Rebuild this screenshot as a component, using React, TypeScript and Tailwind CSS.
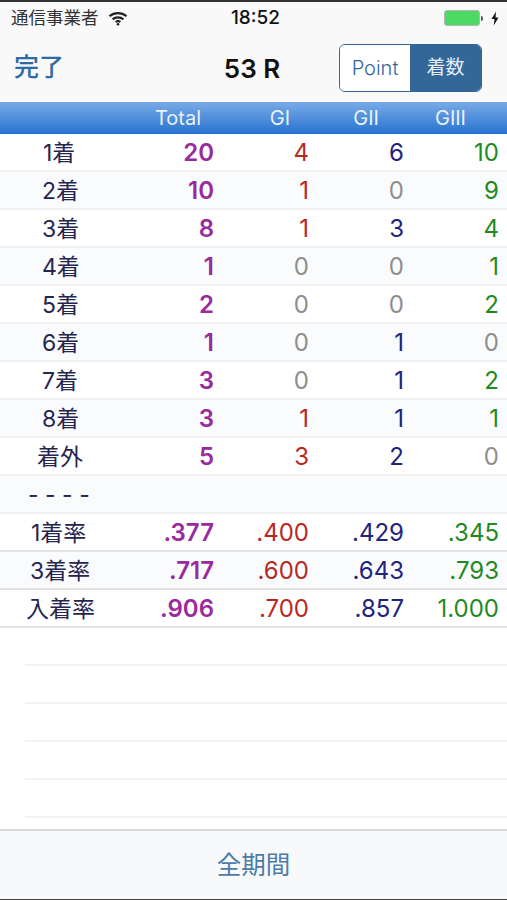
const FONT = "font-['Inter','Noto_Sans_CJK_JP',sans-serif]";

type Row = { label: string; pad: string; total: string; g1: string; g2: string; g3: string; tint?: boolean; dark?: boolean };

const ROWS: Row[] = [
  { label: "1着", pad: "pl-[18px]", total: "20", g1: "4", g2: "6", g3: "10" },
  { label: "2着", pad: "pl-[17px]", total: "10", g1: "1", g2: "0", g3: "9", tint: true },
  { label: "3着", pad: "pl-[17px]", total: "8", g1: "1", g2: "3", g3: "4" },
  { label: "4着", pad: "pl-[17px]", total: "1", g1: "0", g2: "0", g3: "1", tint: true },
  { label: "5着", pad: "pl-[17px]", total: "2", g1: "0", g2: "0", g3: "2" },
  { label: "6着", pad: "pl-[17px]", total: "1", g1: "0", g2: "1", g3: "0", tint: true },
  { label: "7着", pad: "pl-[17px]", total: "3", g1: "0", g2: "1", g3: "2" },
  { label: "8着", pad: "pl-[17px]", total: "3", g1: "1", g2: "1", g3: "1", tint: true },
  { label: "着外", pad: "pl-[12px]", total: "5", g1: "3", g2: "2", g3: "0" },
  { label: "- - - -", pad: "pl-[3px]", total: "", g1: "", g2: "", g3: "", tint: true },
  { label: "1着率", pad: "pl-[6px]", total: ".377", g1: ".400", g2: ".429", g3: ".345", dark: true },
  { label: "3着率", pad: "pl-[5px]", total: ".717", g1: ".600", g2: ".643", g3: ".793", tint: true, dark: true },
  { label: "入着率", pad: "pl-[1px]", total: ".906", g1: ".700", g2: ".857", g3: "1.000", dark: true },
];

function Cell({ value, color }: { value: string; color: string }) {
  const zero = value === "0";
  return (
    <div className={`w-[95px] shrink-0 text-right text-[24px] ${zero ? "text-[#8e8e8e]" : color}`}>{value}</div>
  );
}

function WifiIcon() {
  return (
    <svg width="20" height="15" viewBox="0 0 20 15" fill="none" stroke="#222" strokeWidth="2.2">
      <path d="M1.5 5.2C6.3 1 13.7 1 18.5 5.2" />
      <path d="M4.6 8.3C7.7 5.7 12.3 5.7 15.4 8.3" />
      <path d="M7.6 11C8.9 10 11.1 10 12.4 11" />
      <circle cx="10" cy="13.2" r="1.3" fill="#222" stroke="none" />
    </svg>
  );
}

function Battery() {
  return (
    <div className="flex items-center gap-[1px]">
      <div className="h-[16px] w-[36px] rounded-[3px] bg-[#4cd964] border border-[#b5b5b5]" />
      <div className="h-[5px] w-[2px] rounded-r-sm bg-[#555]" />
      <svg width="10" height="15" viewBox="0 0 10 15" className="ml-[6px]">
        <path d="M6 0.5 L1.5 8 H4.5 L3.8 14.5 L8.5 6.5 H5.5 Z" fill="#111" />
      </svg>
    </div>
  );
}

export default function App() {
  return (
    <div className={`${FONT} flex h-[900px] w-[507px] flex-col overflow-hidden bg-white`}>
      <div className="h-[2px] shrink-0 bg-[#333]" />

      {/* status + nav */}
      <div className="shrink-0 bg-[#f9f9f9]">
        <div className="flex h-[32px] items-center justify-between pl-[11px] pr-[7px]">
          <div className="flex w-[170px] items-center gap-[9px]">
            <span className="text-[17.5px] text-[#333]">通信事業者</span>
            <WifiIcon />
          </div>
          <span className="text-[19px] font-medium text-[#111]">18:52</span>
          <div className="flex w-[170px] justify-end">
            <Battery />
          </div>
        </div>
        <div className="flex h-[68px] items-center justify-between pl-[14px] pr-[25px]">
          <span className="w-[143px] text-[25px] font-medium text-[#2f6ba3]">完了</span>
          <span className="pl-[8px] text-[26px] font-semibold text-[#111]">53 R</span>
          <div className="flex h-[48px] w-[143px] overflow-hidden rounded-[6px] border border-[#336699]">
            <div className="flex w-[70px] items-center justify-center bg-white text-[20px] font-light text-[#336699]">Point</div>
            <div className="flex flex-1 items-center justify-center bg-[#336699] text-[19px] text-[#e6edf5]">着数</div>
          </div>
        </div>
      </div>

      {/* column header */}
      <div className="flex h-[32px] shrink-0 items-center bg-gradient-to-b from-[#78abe6] to-[#2272cf] pl-[24px] text-[20px] text-[#e8f1fb]">
        <div className="w-[177px] shrink-0 text-right">Total</div>
        <div className="w-[89px] shrink-0 text-right">GI</div>
        <div className="w-[89px] shrink-0 text-right">GII</div>
        <div className="w-[87px] shrink-0 text-right">GIII</div>
      </div>

      {/* table */}
      <div className="flex-1 overflow-hidden">
        {ROWS.map((r) => (
          <div key={r.label} className={r.tint ? "bg-[#fafbfd]" : "bg-white"}>
            <div className={`flex h-[38px] items-center border-b-2 pl-[25px] pr-[8px] pt-[2px] ${r.dark ? "border-[#e0e2e4]" : "border-[#eff0f2]"}`}>
              <div className={`w-[94px] shrink-0 text-[23px] text-[#25254f] ${r.pad}`}>{r.label}</div>
              <div className="w-[95px] shrink-0 text-right text-[24px] font-semibold text-[#9a2a9e]">{r.total}</div>
              <Cell value={r.g1} color="text-[#b8281f]" />
              <Cell value={r.g2} color="text-[#22227f]" />
              <Cell value={r.g3} color="text-[#1f8a1f]" />
            </div>
          </div>
        ))}
        {[0, 1, 2, 3, 4].map((i) => (
          <div key={i} className="ml-[25px] h-[38px] border-b-2 border-[#f2f3f4]" />
        ))}
      </div>

      {/* toolbar */}
      <div className="flex h-[70px] shrink-0 items-center justify-center border-t-2 border-[#d8d8d8] bg-[#f8f9fa] text-[24.5px] text-[#4d7ba8]">
        全期間
      </div>
      <div className="h-[1px] shrink-0 bg-[#444]" />
    </div>
  );
}
